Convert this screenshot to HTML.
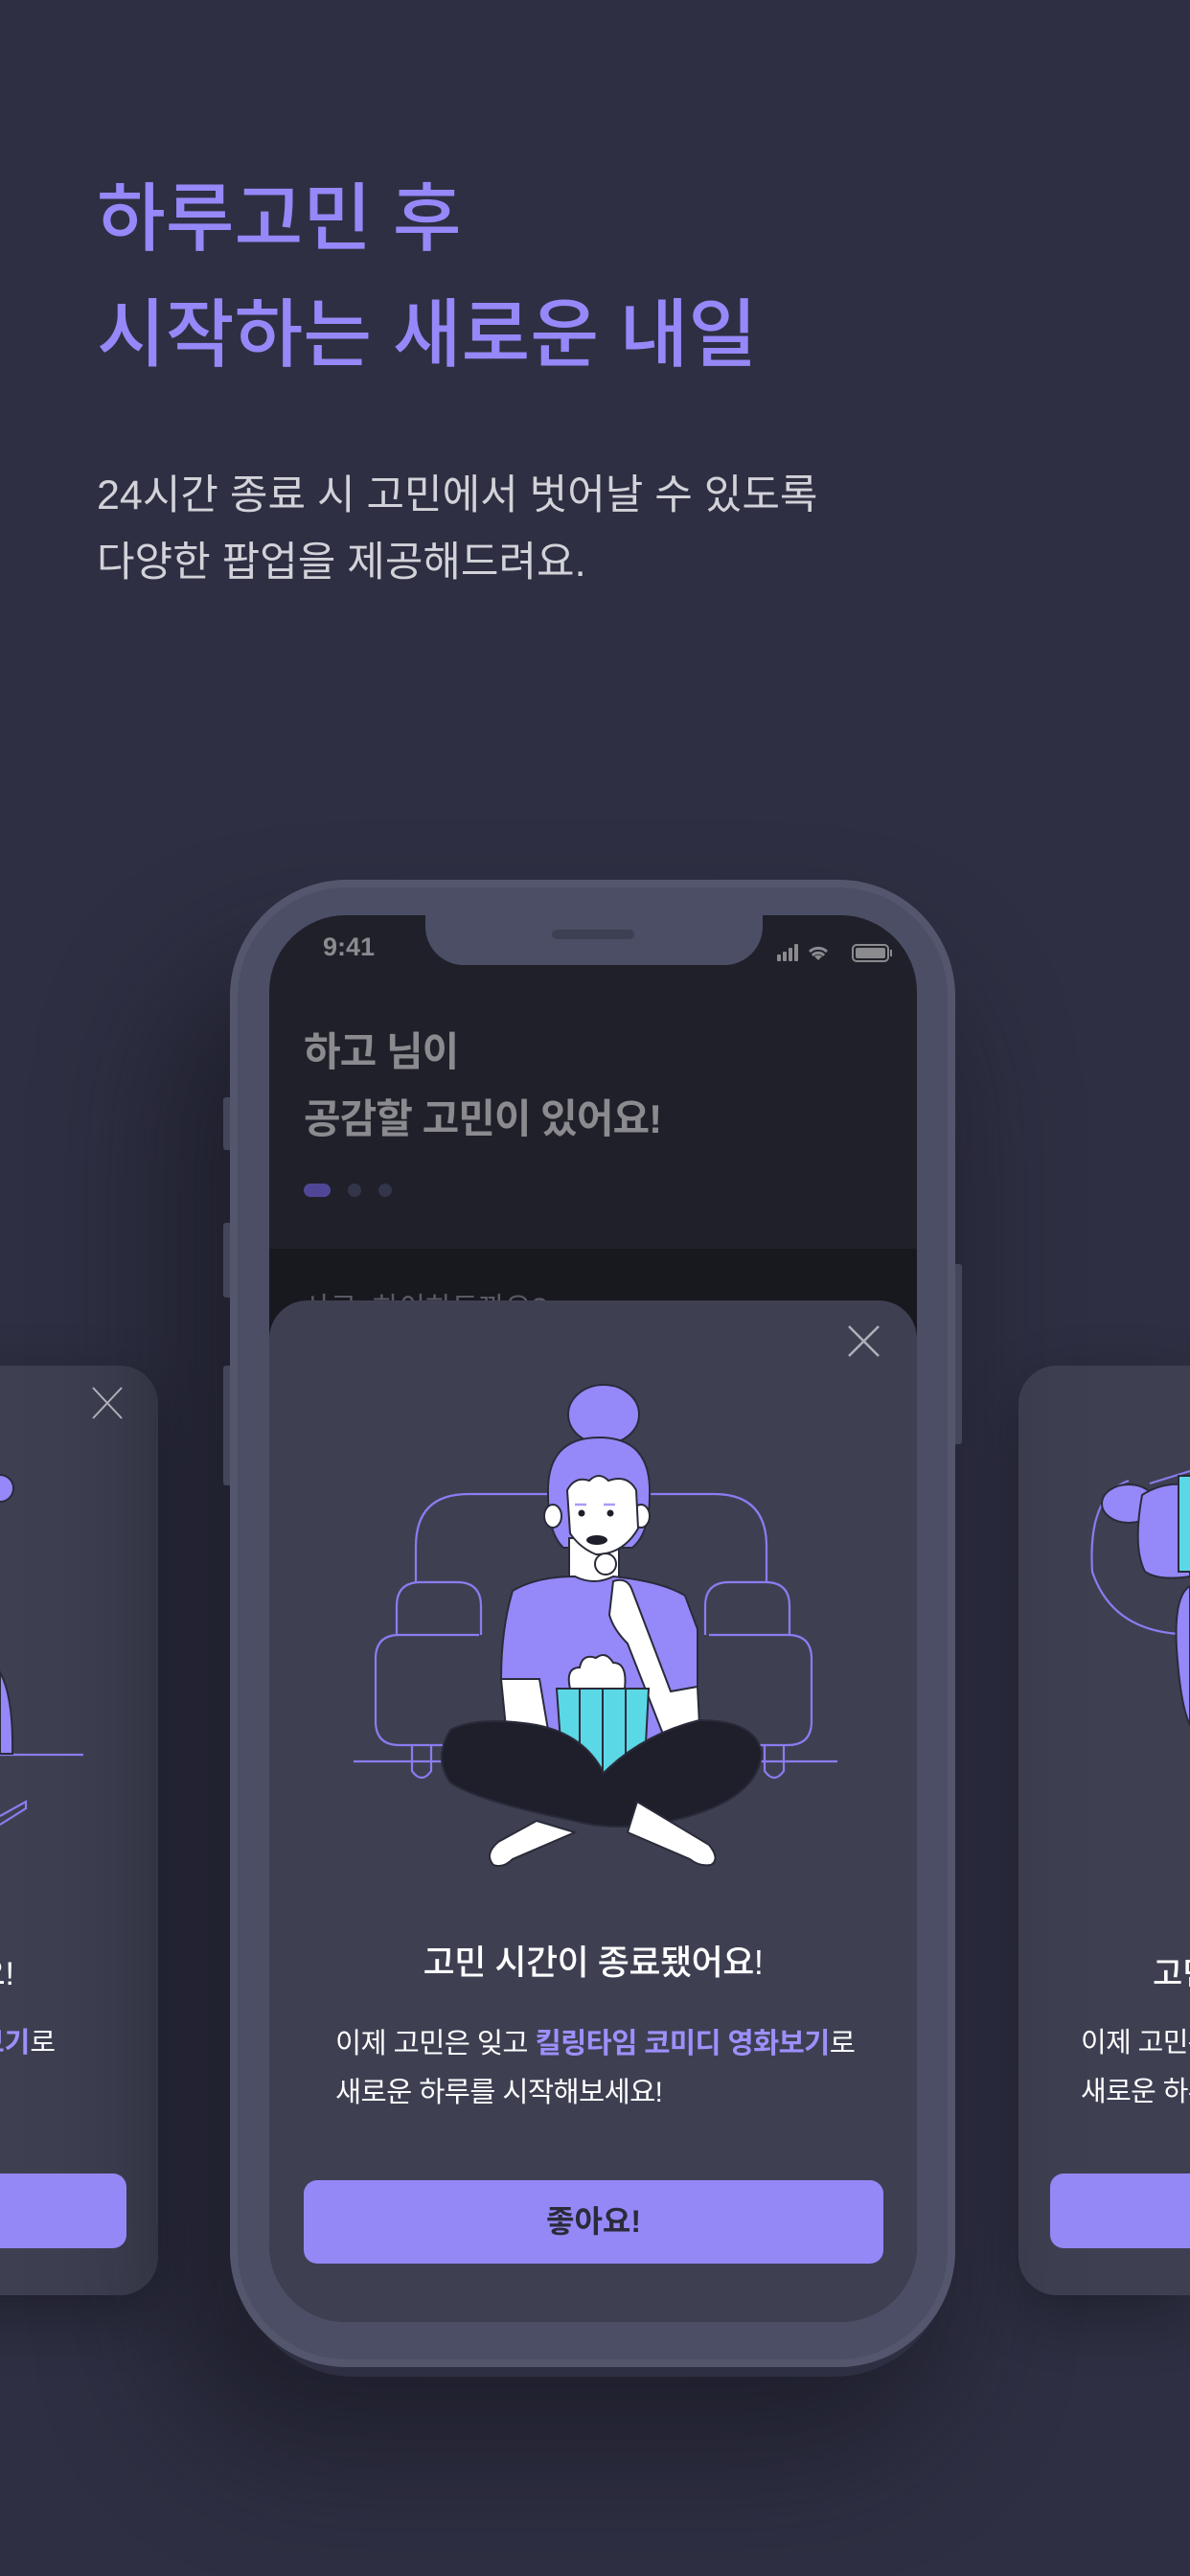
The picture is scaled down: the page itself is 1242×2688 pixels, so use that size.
<!DOCTYPE html>
<html><head><meta charset="utf-8"><style>
*{margin:0;padding:0;box-sizing:border-box}
body{width:1242px;height:2688px;background:#2e2f42;position:relative;overflow:hidden;font-family:"Liberation Sans","Noto Sans CJK KR",sans-serif}
#wrap{position:absolute;left:0;top:0;width:1242px;height:2688px;overflow:hidden}
.abs{position:absolute}
.t1{left:101px;top:168px;font-size:78px;line-height:121px;color:#9588f8;font-weight:500;white-space:nowrap}
.t2{left:101px;top:482px;font-size:43px;line-height:70px;color:#d2d2d9;white-space:nowrap}
.card{background:#3e4052;border-radius:40px}
.clip{position:absolute;overflow:hidden}
.clip span{position:absolute;right:0;top:0;white-space:nowrap}
</style></head><body><div id="wrap">
<div class="abs t1">하루고민 후<br>시작하는 새로운 내일</div>
<div class="abs t2">24시간 종료 시 고민에서 벗어날 수 있도록<br>다양한 팝업을 제공해드려요.</div>

<div class="abs card" style="left:-100px;top:1425px;width:265px;height:970px;box-shadow:0 20px 60px rgba(0,0,0,.3)"></div>
<div class="abs card" style="left:1063px;top:1425px;width:179px;height:970px;border-radius:40px 0 0 40px;box-shadow:0 20px 60px rgba(0,0,0,.3)"></div>

<div class="abs" style="left:250px;top:1000px;width:740px;height:1480px;border-radius:120px;box-shadow:-40px 40px 120px 40px rgba(20,20,30,.55)"></div>
<div class="abs" style="left:233px;top:1145px;width:10px;height:55px;background:#44475c;border-radius:3px"></div>
<div class="abs" style="left:233px;top:1276px;width:10px;height:78px;background:#44475c;border-radius:3px"></div>
<div class="abs" style="left:233px;top:1425px;width:10px;height:125px;background:#44475c;border-radius:3px"></div>
<div class="abs" style="left:994px;top:1319px;width:10px;height:188px;background:#44475c;border-radius:3px"></div>
<div class="abs" style="left:240px;top:918px;width:757px;height:1552px;border-radius:122px;background:#4b4e64;box-shadow:inset 0 0 0 8px #53566d"></div>
<div class="abs" style="left:281px;top:955px;width:676px;height:1468px;border-radius:80px;background:#1f2029;overflow:hidden">
  <div class="abs" style="left:0;top:348px;width:676px;height:200px;background:#18181f"></div>
  <div class="abs" style="left:36px;top:385px;font-size:30px;color:#5a5a66;white-space:nowrap">사로, 하이하도까요?</div>
  <div class="abs" style="left:0;top:402px;width:676px;height:1066px;background:#3e4052;border-radius:40px 40px 0 0"></div>
  <div class="abs" style="left:36px;top:108px;font-size:42px;line-height:70px;font-weight:700;color:#8a8a8f;white-space:nowrap;letter-spacing:-1px">하고 님이<br>공감할 고민이 있어요!</div>
  <div class="abs" style="left:36px;top:280px;width:28px;height:14px;border-radius:7px;background:#4f4796"></div>
  <div class="abs" style="left:82px;top:280px;width:14px;height:14px;border-radius:7px;background:#33354a"></div>
  <div class="abs" style="left:114px;top:280px;width:14px;height:14px;border-radius:7px;background:#33354a"></div>
  <div class="abs" style="left:56px;top:18px;font-size:27px;color:#8a8a8f;font-weight:700">9:41</div>
</div>
<div class="abs" style="left:444px;top:950px;width:352px;height:57px;background:#4b4e64;border-radius:0 0 40px 40px"></div>
<div class="abs" style="left:576px;top:970px;width:86px;height:10px;background:#3d4053;border-radius:5px"></div>
<svg class="abs" style="left:805px;top:980px" width="140" height="30" viewBox="0 0 140 30">
<g fill="#8a8a8f"><rect x="6" y="16" width="4" height="7" rx="1"/><rect x="12" y="13" width="4" height="10" rx="1"/><rect x="18" y="9" width="4" height="14" rx="1"/><rect x="24" y="5" width="4" height="18" rx="1"/>
<path d="M49 22 l-4 -4 a6 6 0 0 1 8 0z"/><path d="M40 13 a13 13 0 0 1 18 0" stroke="#8a8a8f" stroke-width="3" fill="none"/><path d="M43 17 a8 8 0 0 1 12 0" stroke="#8a8a8f" stroke-width="3" fill="none"/>
<rect x="85" y="6" width="37" height="17" rx="4" fill="none" stroke="#8a8a8f" stroke-width="2"/><rect x="88" y="9" width="31" height="11" rx="2"/><rect x="124" y="11" width="2" height="7"/></g></svg>

<svg class="abs" style="left:0;top:0" width="1242" height="2688" viewBox="0 0 1242 2688">
<g fill="none" stroke="#8b7cf0" stroke-width="2.2">
<path d="M434 1651 V1614 Q434 1559 489 1559 H745 Q800 1559 800 1614 V1651"/>
<path d="M414 1706 V1676 Q414 1651 439 1651 H477 Q502 1651 502 1676 V1706"/>
<path d="M736 1706 V1676 Q736 1651 761 1651 H799 Q824 1651 824 1676 V1706"/>
<path d="M500 1706 H417 Q392 1706 392 1731 V1796 Q392 1821 417 1821 H470"/>
<path d="M740 1706 H822 Q847 1706 847 1731 V1796 Q847 1821 822 1821 H780"/>
<path d="M369 1838 H874"/>
<path d="M430 1821 V1848 Q440 1862 450 1848 V1821"/>
<path d="M798 1821 V1848 Q808 1862 818 1848 V1821"/>
<path d="M0 1831 H87"/><path d="M0 1895 L27 1880 L27 1887 L0 1904"/>
<path d="M1178 1545 Q1135 1560 1140 1640 Q1160 1700 1230 1705"/>
<path d="M1200 1548 L1242 1535"/>
</g>
<g stroke="#2a2b3a" stroke-width="2">
<circle cx="0" cy="1553" r="14" fill="#9588f8"/>
<path d="M0 1745 Q14 1770 13 1830 H0z" fill="#9588f8"/>
<ellipse cx="1178" cy="1569" rx="28" ry="20" fill="#9588f8"/>
<path d="M1192 1560 Q1215 1545 1242 1550 V1645 Q1210 1650 1195 1640 Q1182 1615 1192 1560z" fill="#9588f8"/>
<rect x="1230" y="1540" width="16" height="100" fill="#5bd8e6"/>
<path d="M1242 1655 Q1225 1665 1228 1720 Q1232 1780 1242 1800z" fill="#9588f8"/>
<ellipse cx="630" cy="1476" rx="37" ry="31" fill="#9588f8"/>
<path d="M572 1560 Q570 1500 625 1500 Q680 1500 678 1560 Q678 1600 660 1615 H588 Q572 1600 572 1560z" fill="#9588f8"/>
<ellipse cx="577" cy="1582" rx="9" ry="12" fill="#fff"/>
<ellipse cx="669" cy="1582" rx="9" ry="12" fill="#fff"/>
<path d="M594 1605 V1650 Q620 1660 646 1650 V1605z" fill="#fff"/>
<path d="M592 1555 Q600 1540 615 1545 Q625 1535 635 1545 Q655 1538 664 1555 L666 1595 Q650 1622 622 1622 Q605 1615 595 1600z" fill="#fff"/>
<path d="M535 1660 Q560 1645 600 1645 Q620 1655 640 1645 Q690 1650 715 1665 L728 1700 L728 1760 L700 1765 L690 1823 H540 L523 1752 Q523 1700 535 1660z" fill="#9588f8"/>
<path d="M523 1752 H563 L575 1823 H530z" fill="#fff"/>
<path d="M700 1765 L728 1760 L730 1800 Q722 1835 700 1830 L655 1715 Q640 1700 636 1685 L640 1650 Q655 1645 660 1660 Q675 1700 700 1765z" fill="#fff"/>
<circle cx="632" cy="1632" r="11" fill="#fff"/>
<path d="M595 1762 Q590 1740 605 1740 Q608 1725 622 1730 Q632 1722 640 1735 Q655 1735 652 1762z" fill="#fff"/>
<path d="M581 1762 H677 L672 1858 H588z" fill="#5bd8e6"/>
<path d="M605 1762 V1858 M629 1762 V1858 M653 1762 V1858" fill="none"/>
<path d="M470 1805 Q500 1790 560 1800 Q610 1810 630 1850 Q670 1810 730 1795 Q790 1795 795 1830 Q790 1880 700 1900 Q640 1912 600 1900 Q500 1880 470 1860 Q452 1835 470 1805z" fill="#1e1f2b"/>
<path d="M560 1900 L520 1922 Q505 1935 515 1946 Q525 1950 535 1940 L600 1912z" fill="#fff"/>
<path d="M665 1880 L740 1925 Q752 1940 742 1946 Q730 1948 720 1940 L655 1912z" fill="#fff"/>
</g>
<g fill="#1e1f2b"><circle cx="607" cy="1579" r="3.5"/><circle cx="637" cy="1579" r="3.5"/><ellipse cx="623" cy="1607" rx="11" ry="5"/></g>
<g stroke="#a99cf7" stroke-width="2.5"><path d="M600 1570 H612 M630 1570 H642"/></g>
<g stroke="#b0b0b8" stroke-width="2.5"><path d="M886 1384 L917 1415 M917 1384 L886 1415"/><path d="M97 1448 L127 1480 M127 1448 L97 1480" stroke-width="2"/></g>
</svg>

<div class="abs" style="left:281px;top:2020px;width:676px;text-align:center;font-size:36px;line-height:56px;color:#fff;font-weight:500;letter-spacing:-0.5px">고민 시간이 종료됐어요!</div>
<div class="abs" style="left:350px;top:2107px;font-size:29.5px;line-height:51px;color:#fff;white-space:nowrap;letter-spacing:-0.6px">이제 고민은 잊고 <b style="color:#9d90fb">킬링타임 코미디 영화보기</b>로<br>새로운 하루를 시작해보세요!</div>
<div class="abs" style="left:317px;top:2275px;width:605px;height:87px;border-radius:14px;background:#9488f7;text-align:center;line-height:87px;font-size:32px;font-weight:700;color:#2b2b3a">좋아요!</div>

<div class="clip" style="left:0;top:2032px;width:15px;height:56px;font-size:34px;line-height:56px;color:#fff;font-weight:500"><span>요!</span></div>
<div class="clip" style="left:0;top:2107px;width:58px;height:51px;font-size:29px;line-height:51px;color:#fff"><span><b style="color:#9d90fb">영화보기</b>로</span></div>
<div class="abs" style="left:0;top:2268px;width:132px;height:78px;border-radius:0 14px 14px 0;background:#9488f7"></div>
<div class="abs" style="left:1203px;top:2032px;width:39px;overflow:hidden;font-size:34px;line-height:56px;color:#fff;font-weight:500;white-space:nowrap">고민 시간이</div>
<div class="abs" style="left:1128px;top:2107px;width:114px;overflow:hidden;font-size:29px;line-height:51px;color:#fff;white-space:nowrap;letter-spacing:-0.6px">이제 고민은 잊고<br>새로운 하루를</div>
<div class="abs" style="left:1096px;top:2268px;width:146px;height:78px;border-radius:14px 0 0 14px;background:#9488f7"></div>
</div></body></html>
